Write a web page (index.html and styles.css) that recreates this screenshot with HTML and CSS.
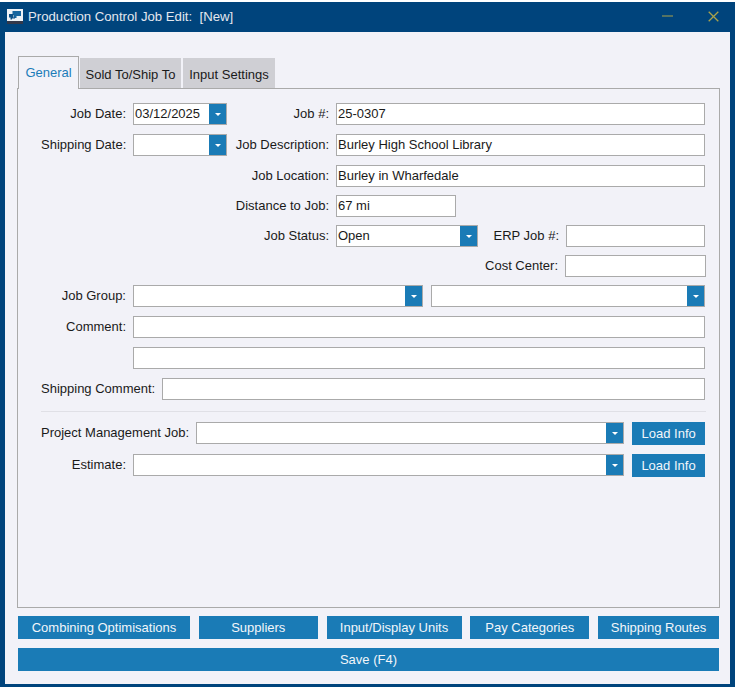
FILE: index.html
```html
<!DOCTYPE html>
<html lang="en">
<head>
<meta charset="utf-8">
<title>Production Control Job Edit</title>
<link rel="stylesheet" href="styles.css">
</head>
<body>
<div class="window">
  <header class="titlebar">
    <svg class="app-icon" width="16" height="15" viewBox="0 0 16 15"><rect x="0" y="0" width="16" height="12" fill="#eef2f7"/><path d="M5.5 2H14V7H9.5V9H7V6H5.5Z" fill="#17659f"/><path d="M2 5H6.5V8.5H8V9.5H5V10.5H3.5V8.5H2Z" fill="#0d4f86"/><rect x="0" y="12" width="16" height="3" fill="#33384a"/></svg>
    <span class="title">Production Control Job Edit:&nbsp; [New]</span>
    <svg class="win-min" width="12" height="2" viewBox="0 0 12 2"><rect width="11" height="1" y="0.5" fill="#a9a24a"/></svg>
    <svg class="win-close" width="11" height="11" viewBox="0 0 11 11"><path d="M.7.7 10.3 10.3M10.3.7.7 10.3" stroke="#a9a24a" stroke-width="1.3" fill="none"/></svg>
  </header>
  <main class="client">
    <nav class="tabs">
      <div class="tab active">General</div>
      <div class="tab tab-sold">Sold To/Ship To</div>
      <div class="tab tab-input">Input Settings</div>
    </nav>
    <section class="panel">
      <div class="row">
        <label class="lbl w85">Job Date:</label>
        <div class="combo w94"><span class="val">03/12/2025</span><span class="drop"><i></i></span></div>
        <label class="lbl w102">Job #:</label>
        <div class="field w369">25-0307</div>
      </div>
      <div class="row">
        <label class="lbl w85">Shipping Date:</label>
        <div class="combo w94"><span class="val"></span><span class="drop"><i></i></span></div>
        <label class="lbl w102">Job Description:</label>
        <div class="field w369">Burley High School Library</div>
      </div>
      <div class="row indent">
        <label class="lbl w102">Job Location:</label>
        <div class="field w369">Burley in Wharfedale</div>
      </div>
      <div class="row indent tight">
        <label class="lbl w102">Distance to Job:</label>
        <div class="field w120">67 mi</div>
      </div>
      <div class="row indent tight">
        <label class="lbl w102">Job Status:</label>
        <div class="combo w142"><span class="val">Open</span><span class="drop"><i></i></span></div>
        <label class="lbl w81">ERP Job #:</label>
        <div class="field w139"></div>
      </div>
      <div class="row tight end">
        <label class="lbl">Cost Center:</label>
        <div class="field w141"></div>
      </div>
      <div class="row tight">
        <label class="lbl w85">Job Group:</label>
        <div class="combo w290"><span class="val"></span><span class="drop"><i></i></span></div>
        <div class="combo w274 gap8"><span class="val"></span><span class="drop"><i></i></span></div>
      </div>
      <div class="row">
        <label class="lbl w85">Comment:</label>
        <div class="field w572"></div>
      </div>
      <div class="row">
        <span class="w85"></span>
        <div class="field w572"></div>
      </div>
      <div class="row">
        <label class="lbl">Shipping Comment:</label>
        <div class="field w543"></div>
      </div>
      <hr class="divider">
      <div class="row">
        <label class="lbl">Project Management Job:</label>
        <div class="combo w428"><span class="val"></span><span class="drop"><i></i></span></div>
        <button class="btn load">Load Info</button>
      </div>
      <div class="row est">
        <label class="lbl w85">Estimate:</label>
        <div class="combo w491"><span class="val"></span><span class="drop"><i></i></span></div>
        <button class="btn load">Load Info</button>
      </div>
    </section>
    <div class="actions">
      <button class="btn b172">Combining Optimisations</button>
      <button class="btn b119">Suppliers</button>
      <button class="btn b135">Input/Display Units</button>
      <button class="btn b119">Pay Categories</button>
      <button class="btn b121">Shipping Routes</button>
    </div>
    <button class="btn save">Save (F4)</button>
  </main>
</div>
</body>
</html>
```
FILE: styles.css
```css
* { box-sizing: border-box; }
html, body { margin: 0; padding: 0; height: 100%; background: #f2f2f8; }
body { font: 13px "Liberation Sans", Arial, sans-serif; color: #1a1a1a; overflow: hidden; }
.window { width: 735px; height: 687px; padding: 2px 5px 3px; background: linear-gradient(#fff 2px, #00447c 2px); display: flex; flex-direction: column; }
.titlebar { height: 30px; flex: none; display: flex; align-items: center; padding: 0 11px 2px 2px; color: #e4e8ef; }
.app-icon { margin-right: 5px; flex: none; }
.title { flex: 1; font-size: 13.2px; }
.win-min { margin-right: 34px; }
.win-close { margin-right: 0; }
.client { flex: 1; background: #f2f2f8; padding: 24px 10px 0 12px; display: flex; flex-direction: column; }
.tabs { display: flex; height: 32px; align-items: flex-end; margin-left: 1px; position: relative; z-index: 1; gap: 1px; }
.tab { height: 30px; background: #cfcfd4; display: flex; align-items: center; justify-content: center; padding-top: 2px; }
.tab.active { height: 33px; width: 61px; background: #f2f2f8; color: #1c7cb8; border: 1px solid #aaa; border-bottom: 0; margin-bottom: -1px; padding: 0 0 2px; }
.tab-sold { width: 101px; }
.tab-input { width: 92px; margin-left: 1px; }
.panel { height: 520px; width: 703px; border: 1px solid #aaa; padding: 14px 13px 0 23px; flex: none; display: flex; flex-direction: column; }
.row { display: flex; align-items: flex-start; height: 22px; margin-bottom: 9px; flex: none; line-height: 22px; }
.row.tight { margin-top: -1px; }
.row.indent { padding-left: 186px; }
.row.end { justify-content: flex-end; }
.row.est { margin-top: 1px; }
.lbl { text-align: right; margin-right: 7px; white-space: nowrap; flex: none; }
.w85 { width: 85px; flex: none; }
.w102 { width: 102px; }
.w81 { width: 81px; }
.w94 { width: 94px; }
.w120 { width: 120px; }
.w142 { width: 142px; }
.w139 { width: 139px; }
.w141 { width: 141px; }
.w290 { width: 290px; }
.w274 { width: 274px; }
.w369 { width: 369px; }
.w428 { width: 428px; }
.w491 { width: 491px; }
.w543 { width: 543px; }
.w572 { width: 572px; }
.gap8 { margin-left: 8px; }
.row > .w85:not(.lbl) { margin-right: 7px; }
.field, .combo { height: 22px; background: #fff; border: 1px solid #aaa; flex: none; }
.field { padding-left: 1px; line-height: 20px; }
.combo { display: flex; }
.val { flex: 1; padding-left: 1px; line-height: 20px; }
.drop { width: 17px; background: #1a7bb6; display: flex; align-items: center; justify-content: center; }
.drop i { width: 0; height: 0; border: 3.5px solid transparent; border-top: 3.5px solid #fff; border-bottom: 0; display: block; }
.divider { margin: 2px 0 10px; width: 665px; height: 1px; border: 0; background: #e0e0e6; flex: none; }
.btn { border: 0; background: #1a7bb6; color: #f2f6fa; font: inherit; padding: 0; height: 23px; flex: none; }
.load { width: 73px; margin-left: 8px; }
.actions { display: flex; margin: 8px 0 0 1px; justify-content: space-between; width: 701px; }
.b172 { width: 172px; }
.b119 { width: 119px; }
.b135 { width: 135px; }
.b121 { width: 121px; }
.save { width: 701px; margin: 9px 0 0 1px; }
```
